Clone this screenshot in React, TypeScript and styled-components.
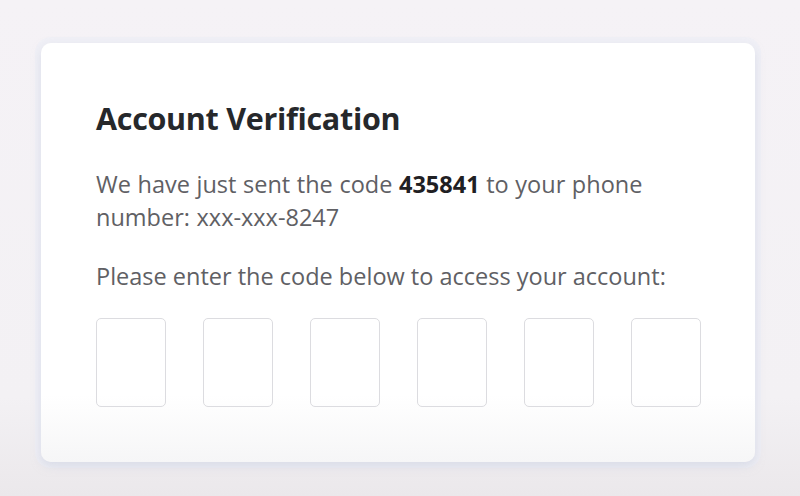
import React from "react";
import styled, { createGlobalStyle } from "styled-components";

const GlobalStyle = createGlobalStyle`
  html, body {
    margin: 0;
    padding: 0;
    background: #f4f1f5;
  }
  body {
    font-family: "Open Sans", "Noto Sans", sans-serif;
  }
`;

export const Page = styled.div`
  width: 800px;
  height: 496px;
  box-sizing: border-box;
  padding: 43px 0 0 41px;
  background: linear-gradient(180deg, #f5f2f6 0%, #f3f1f4 80%, #ebe8eb 100%);
`;

export const Card = styled.div`
  display: flex;
  flex-direction: column;
  box-sizing: border-box;
  width: 714px;
  height: 419px;
  padding: 55px 55px 0 55px;
  border-radius: 10px;
  background: linear-gradient(180deg, #ffffff 0%, #ffffff 84%, #f6f6f7 100%);
  box-shadow: 0 4px 10px rgba(200, 206, 222, 0.55), 0 0 0 6px rgba(236, 238, 246, 0.6);
`;

export const Title = styled.h1`
  margin: 0;
  font-size: 30.5px;
  font-weight: 700;
  color: #26282b;
  line-height: 40px;
  letter-spacing: -0.3px;
`;

export const Message = styled.p`
  margin: 30px 0 0 0;
  font-size: 23.5px;
  line-height: 33px;
  color: #606064;
  word-spacing: 0.5px;

  > strong {
    color: #1f2023;
    font-weight: 700;
  }
`;

export const Prompt = styled.p`
  margin: 26px 0 0 0;
  font-size: 23.5px;
  line-height: 33px;
  color: #606064;
  white-space: nowrap;
`;

export const CodeRow = styled.div`
  display: flex;
  gap: 37px;
  margin-top: 25px;
`;

export const CodeBox = styled.input`
  box-sizing: border-box;
  width: 70px;
  height: 89px;
  border: 1.5px solid #dcdce0;
  border-radius: 5px;
  background: transparent;
  font-family: inherit;
  font-size: 32px;
  text-align: center;
  outline: none;
`;

const App: React.FC = () => {
  const digits = [0, 1, 2, 3, 4, 5];

  return (
    <>
      <GlobalStyle />
      <Page>
        <Card>
          <Title>Account Verification</Title>
          <Message>
            We have just sent the code <strong>435841</strong> to your phone
            number: xxx-xxx-8247
          </Message>
          <Prompt>Please enter the code below to access your account:</Prompt>
          <CodeRow>
            {digits.map((d) => (
              <CodeBox key={d} type="text" maxLength={1} />
            ))}
          </CodeRow>
        </Card>
      </Page>
    </>
  );
};

export default App;
